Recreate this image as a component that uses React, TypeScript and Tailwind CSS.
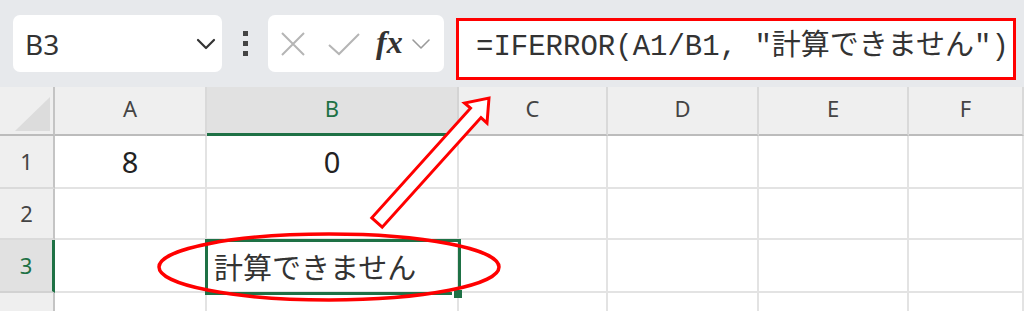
import React from "react";

const UI = "font-['Noto_Sans','Open_Sans',sans-serif]";

function Chevron({ className, size = 18, color = "#333", sw = 2 }: { className?: string; size?: number; color?: string; sw?: number }) {
  return (
    <svg className={className} width={size} height={size * 0.6} viewBox="0 0 20 12" fill="none">
      <path d="M2 2 L10 10 L18 2" stroke={color} strokeWidth={sw} strokeLinecap="round" strokeLinejoin="round" />
    </svg>
  );
}

const colW = ["A", "B", "C", "D", "E", "F"];

export default function App() {
  const gridLine = "border-r-2 border-b-2 border-[#e3e3e3]";
  return (
    <div className={`relative w-[1024px] h-[311px] overflow-hidden bg-white ${UI}`}>
      {/* top bar */}
      <div className="flex items-start h-[87px] bg-[#e7e9ec] pt-[15px]">
        <div className="ml-[13px] w-[209px] h-[57px] rounded-[7px] bg-white flex items-center justify-between pl-[12px] pr-[6px]">
          <span className="text-[28px] text-[#333] leading-none">B3</span>
          <Chevron size={20} color="#333" sw={2.2} />
        </div>
        <div className="w-[46px] h-[57px] flex flex-col items-center justify-center gap-[5px]">
          <span className="w-[5px] h-[5px] bg-[#444]" />
          <span className="w-[5px] h-[5px] bg-[#444]" />
          <span className="w-[5px] h-[5px] bg-[#444]" />
        </div>
        <div className="w-[176px] h-[57px] rounded-[7px] bg-white flex items-center pl-[12px]">
          <svg width="26" height="26" viewBox="0 0 26 26" fill="none">
            <path d="M2 2 L24 24 M24 2 L2 24" stroke="#b5b5b5" strokeWidth="2" />
          </svg>
          <svg className="ml-[21px]" width="34" height="24" viewBox="0 0 34 24" fill="none">
            <path d="M2 13 L12 22 L32 2" stroke="#b5b5b5" strokeWidth="2" />
          </svg>
          <span className="ml-[15px] font-['Liberation_Serif',serif] italic font-bold text-[32px] leading-none text-[#333] -mt-[4px]">fx</span>
          <Chevron className="ml-[8px]" size={20} color="#9a9a9a" sw={1.6} />
        </div>
        <div className="ml-[12px] mt-[3px] w-[560px] h-[62px] border-[3px] border-[#ff0000] bg-white flex items-center pl-[17px]">
          <span className="font-['Liberation_Mono','Noto_Sans_CJK_JP',monospace] text-[29px] text-[#333] leading-none -mt-[4px] whitespace-pre">
            =IFERROR(A1/B1, "計算できません")
          </span>
        </div>
      </div>

      {/* sheet grid */}
      <div className="grid grid-cols-[55px_152px_252px_149px_151px_150px_115px] grid-rows-[49px_53px_51px_53px_18px]">
        {/* header row */}
        <div className="relative bg-[#efefef] border-r-2 border-b-2 border-r-[#c4c4c4] border-b-[#bcbcbc]">
          <svg className="absolute left-[15px] top-[10px]" width="35" height="34" viewBox="0 0 35 34">
            <polygon points="35,0 35,34 0,34" fill="#dcdcdc" />
          </svg>
        </div>
        {colW.map((c) => (
          <div
            key={c}
            className={
              c === "B"
                ? "bg-[#e1e1e1] border-r-2 border-r-[#d4d4d4] border-b-[3px] border-b-[#1e7145] flex items-center justify-center text-[22px] text-[#1e7145]"
                : "bg-[#efefef] border-r-2 border-r-[#d9d9d9] border-b-2 border-b-[#bcbcbc] flex items-center justify-center text-[22px] text-[#444]"
            }
          >
            <span className="-mt-[4px]">{c}</span>
          </div>
        ))}

        {/* row 1 */}
        <div className="bg-[#efefef] border-r-2 border-r-[#c4c4c4] border-b-2 border-b-[#dadada] flex items-center justify-center text-[22px] text-[#444]">1</div>
        <div className={`${gridLine} flex items-center justify-center text-[29px] text-[#222]`}>8</div>
        <div className={`${gridLine} flex items-center justify-center text-[29px] text-[#222]`}>0</div>
        <div className={gridLine} />
        <div className={gridLine} />
        <div className={gridLine} />
        <div className={gridLine} />

        {/* row 2 */}
        <div className="bg-[#efefef] border-r-2 border-r-[#c4c4c4] border-b-2 border-b-[#dadada] flex items-center justify-center text-[22px] text-[#444]">2</div>
        <div className={gridLine} />
        <div className={gridLine} />
        <div className={gridLine} />
        <div className={gridLine} />
        <div className={gridLine} />
        <div className={gridLine} />

        {/* row 3 */}
        <div className="bg-[#e1e1e1] border-r-[3px] border-r-[#1e7145] border-b-2 border-b-[#d2d2d2] flex items-center justify-center text-[22px] text-[#1e7145]">3</div>
        <div className={gridLine} />
        <div className={`relative ${gridLine}`}>
          <div className="absolute -left-[2px] -top-[1px] w-[256px] h-[56px] border-[3px] border-[#1e7145] flex items-center pl-[6px]">
            <span className="font-['Noto_Sans_CJK_JP',sans-serif] text-[29px] text-[#333] leading-none -mt-[2px]">計算できません</span>
          </div>
          <div className="absolute left-[245px] top-[48px] w-[10px] h-[10px] bg-[#1e7145] border-l-2 border-t-2 border-white" />
        </div>
        <div className={gridLine} />
        <div className={gridLine} />
        <div className={gridLine} />
        <div className={gridLine} />

        {/* row 4 */}
        <div className="bg-[#efefef] border-r-2 border-r-[#c4c4c4]" />
        <div className="border-r-2 border-[#e3e3e3]" />
        <div className="border-r-2 border-[#e3e3e3]" />
        <div className="border-r-2 border-[#e3e3e3]" />
        <div className="border-r-2 border-[#e3e3e3]" />
        <div className="border-r-2 border-[#e3e3e3]" />
        <div className="border-r-2 border-[#e3e3e3]" />
      </div>

      {/* annotation overlay */}
      <svg className="absolute left-0 top-0 pointer-events-none" width="1024" height="311" viewBox="0 0 1024 311" fill="none">
        <polygon
          points="489,98 487,123 481,117.6 382.2,227.2 371.8,217.8 470.5,108.2 464.5,103"
          fill="white"
          stroke="#ff0000"
          strokeWidth="3"
          strokeLinejoin="miter"
        />
        <ellipse cx="329" cy="267" rx="170" ry="33" stroke="#ff0000" strokeWidth="3.5" />
      </svg>
    </div>
  );
}
